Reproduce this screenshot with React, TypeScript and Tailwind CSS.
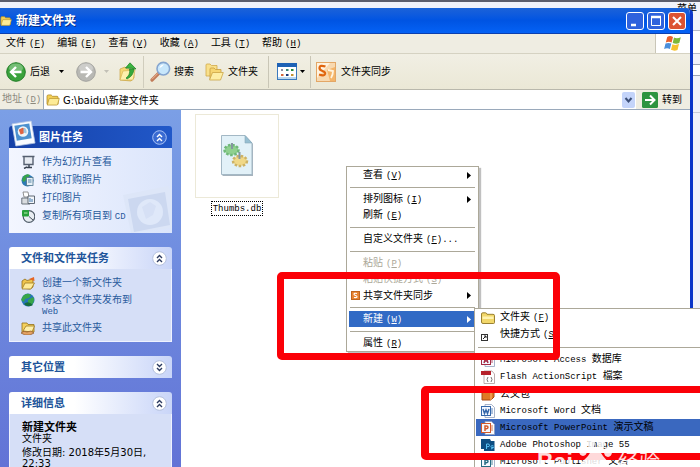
import React from "react";

const ui = "font-['Liberation_Sans','Noto_Sans_CJK_SC',sans-serif]";

// ASCII runs are set in a narrow monospace, the rest in the CJK face
function Mixed({ text }: { text: string }) {
  return (
    <>
      {text.split(/([\x21-\x7e][\x20-\x7e]*)/).map((part, i) =>
        /^[\x21-\x7e]/.test(part) ? (
          <span key={i} className="font-['Liberation_Mono',monospace] text-[9px] whitespace-pre">
            {part}
          </span>
        ) : (
          part
        ),
      )}
    </>
  );
}

interface AccelProps {
  label: string;
  letter?: string;
  suffix?: string;
}

function Accel({ label, letter, suffix }: AccelProps) {
  return (
    <span className="whitespace-nowrap">
      <Mixed text={label} />
      {letter && (
        <span className="font-['Liberation_Mono',monospace] text-[9px] ml-[3px]">
          (<u>{letter}</u>){suffix}
        </span>
      )}
    </span>
  );
}

function FolderIcon({ className = "w-[15px] h-[13px]" }: { className?: string }) {
  return (
    <svg viewBox="0 0 15 13" className={`${className} shrink-0`}>
      <path d="M1 11V2.5Q1 1 2.5 1H5.5L7 2.5H12Q13 2.5 13 4V11Z" fill="#f3cf55" stroke="#a98420" strokeWidth=".8" />
      <path d="M1.3 12L3.2 5.5Q3.4 4.8 4.2 4.8H14.3L12.5 11.3Q12.3 12 11.5 12Z" fill="#fdeb97" stroke="#b8942e" strokeWidth=".8" />
    </svg>
  );
}

function ClosedFolderIcon() {
  return (
    <svg viewBox="0 0 14 12" className="w-[14px] h-3 shrink-0">
      <path d="M.5 10V2Q.5 .8 1.8 .8H4.5Q5.5 .8 6 2.3H12Q13.5 2.3 13.5 3.6V10.5Q13.5 11.5 12.5 11.5H2Q.5 11.5 .5 10Z" fill="#f2d76a" stroke="#8f7524" strokeWidth=".9" />
      <path d="M1.5 4.5H12.5V7H1.5Z" fill="#fff3b0" />
    </svg>
  );
}

function ArrowCircle({ back }: { back?: boolean }) {
  return (
    <svg viewBox="0 0 20 20" className="w-5 h-5 shrink-0">
      <circle cx="10" cy="10" r="9.3" fill={back ? "#3aa23c" : "#b8b8b4"} stroke={back ? "#227d27" : "#a2a29e"} />
      <ellipse cx="10" cy="6" rx="7" ry="4.5" fill="#fff" opacity=".3" />
      <path
        d={back ? "M15.5 10H5.5M10 5L5 10L10 15" : "M4.5 10H14.5M10 5L15 10L10 15"}
        fill="none"
        stroke="#fff"
        strokeWidth="2.4"
      />
    </svg>
  );
}

function DownMark({ className }: { className: string }) {
  return (
    <svg viewBox="0 0 5 3" className={`w-[5px] h-[3px] shrink-0 ${className}`}>
      <path d="M0 0H5L2.5 3Z" fill="currentColor" />
    </svg>
  );
}

function UpFolderIcon() {
  return (
    <svg viewBox="0 0 18 20" className="w-[18px] h-5 shrink-0">
      <path d="M1 18V7L6 5L8 7H15V16L12 19Z" fill="#f5d873" stroke="#c9a545" strokeWidth=".7" />
      <path d="M1 18L4 9L16 8L14 18Z" fill="#fdf0ac" stroke="#d0ad4c" strokeWidth=".6" />
      <path d="M7 16Q11.5 13 10.5 7H15Q14.5 14 8 17Z" fill="#36a93b" stroke="#187c22" strokeWidth=".6" />
      <path d="M6.5 6L11 .8L17 7L12.5 6.3Z" fill="#3cb541" stroke="#187c22" strokeWidth=".7" />
    </svg>
  );
}

function SearchIcon() {
  return (
    <svg viewBox="0 0 21 21" className="w-[21px] h-[21px] shrink-0">
      <path d="M2 19L9 12" stroke="#c17b58" strokeWidth="3.2" strokeLinecap="round" />
      <path d="M2 18.3L8 12.3" stroke="#f0b794" strokeWidth="1" />
      <circle cx="13.3" cy="7.7" r="6.3" fill="#c8e7fb" stroke="#85a5cf" strokeWidth="1.6" />
      <path d="M9.5 7Q10 3.7 14 3.5Q12 6 9.5 7Z" fill="#fff" />
    </svg>
  );
}

function FoldersIcon() {
  return (
    <svg viewBox="0 0 19 18" className="w-[19px] h-[18px] shrink-0">
      <path d="M1 13V2Q1 1 2 1H5L6.5 2.5H12V13Z" fill="#f9e08a" stroke="#d1a94a" strokeWidth=".8" />
      <path d="M5 16V6Q5 5 6 5H9L10.5 6.5H16V9" fill="#f6d672" stroke="#c89d3c" strokeWidth=".8" />
      <path d="M4.5 17L7.5 9.5H18.3L15.5 17Z" fill="#fdeea5" stroke="#cba445" strokeWidth=".8" />
    </svg>
  );
}

function ViewsIcon() {
  return (
    <svg viewBox="0 0 20 17" className="w-5 h-[17px] shrink-0">
      <rect x=".5" y=".5" width="19" height="16" fill="#fff" stroke="#3a79bd" />
      <rect width="20" height="4" fill="#1e62b5" />
      <rect x="1" y="14" width="18" height="2" fill="#b9d7ef" />
      <rect x="4" y="6" width="2" height="2" fill="#8e8ca2" />
      <rect x="9" y="6" width="2.5" height="2" fill="#398775" />
      <rect x="14" y="6" width="2.5" height="2" fill="#25883a" />
      <rect x="4" y="11" width="2.5" height="2" fill="#d5683d" />
      <rect x="9" y="11" width="2.5" height="2" fill="#183778" />
      <rect x="14" y="11" width="2.5" height="2" fill="#c49330" />
    </svg>
  );
}

function SyncIcon() {
  return (
    <svg viewBox="0 0 20 20" className="w-5 h-5 shrink-0">
      <rect x=".5" y=".5" width="19" height="19" fill="#f8d9b0" stroke="#e3a766" />
      <path d="M1 1H14L1 16Z" fill="#fff3e0" />
      <path d="M11 8L19 5V19H14Z" fill="#f4b56a" />
      <path d="M9.5 4.5Q3.5 2.5 3.5 6Q3.5 8 6.5 9Q9.5 10 9 12Q8.3 14.5 3 12.5" fill="none" stroke="#e0650e" strokeWidth="2.3" />
      <path d="M12 8L17 9Q17 13 15 16" fill="none" stroke="#fff4df" strokeWidth="1.8" />
    </svg>
  );
}

function SmallSyncIcon() {
  return (
    <svg viewBox="0 0 9 9" className="w-[9px] h-[9px]">
      <rect x=".5" y=".5" width="8" height="8" fill="#e88331" stroke="#c0641d" />
      <path d="M6 2.5Q3 1.8 3 3.3Q3 4.2 4.5 4.5Q6 4.9 6 5.8Q5.8 7 3 6.5" fill="none" stroke="#fff" strokeWidth="1.1" />
    </svg>
  );
}

function WindowsFlag() {
  return (
    <svg viewBox="0 0 18 17" className="w-[18px] h-[17px]">
      <path d="M3.2 2Q6 .2 9 2L7.6 7.5Q4.8 6 1.8 7.5Z" fill="#e8602c" />
      <path d="M10 2.6Q13 4 16.8 2.3L15.3 8Q12.2 9.5 8.7 8Z" fill="#7cb83a" />
      <path d="M1.5 8.6Q4.4 7.2 7.3 8.6L5.9 14Q3.3 12.4 .1 13.9Z" fill="#4a8fdc" />
      <path d="M8.4 9.2Q11.4 10.7 15 9.1L13.5 14.9Q10.3 16.4 7 14.8Z" fill="#f6c22f" />
    </svg>
  );
}

const taskIcons = {
  slides: (
    <>
      <path d="M1.5 1.5H13.5M3 2V9.5H12V2" fill="#e7ebf2" stroke="#555f70" strokeWidth="1.4" />
      <path d="M6 12.5H11M8 10V12M3 13.5L6 12" stroke="#38414f" strokeWidth="1.4" />
    </>
  ),
  order: (
    <>
      <circle cx="6.5" cy="7.5" r="6" fill="#2c7ab5" />
      <path d="M2 4Q5 0 9 2L6 6L3 9Q0 8 2 4Z" fill="#38a34a" />
      <rect x="5.5" y="4.5" width="6.5" height="8" fill="#e7f1f7" stroke="#4b738b" strokeWidth=".8" />
      <path d="M7 7H10.5M7 9H10.5" stroke="#5383a4" />
    </>
  ),
  print: (
    <>
      <path d="M2 1H7L8 6H3Z" fill="#fff" stroke="#777" strokeWidth=".8" />
      <path d="M.8 7H9V13H.8Z" fill="#d9dcdf" stroke="#5d6670" strokeWidth=".9" />
      <path d="M7 5H13.5V12.5H7Z" fill="#f3f6fa" stroke="#4f5a66" strokeWidth=".9" />
      <path d="M9 7V11M11 8V11" stroke="#3f76ac" />
    </>
  ),
  copy: (
    <>
      <circle cx="8" cy="7.5" r="5.8" fill="#e8edf2" stroke="#515d69" strokeWidth="1.2" />
      <path d="M8 7.5L12 11" stroke="#45505d" />
      <rect x="1" y="1" width="7" height="6.5" rx="1" fill="#27a13a" />
      <path d="M3 4H6.5" stroke="#b9ecaf" />
    </>
  ),
  newFolder: (
    <>
      <path d="M1 12V5L4 3L6 4.5L12 3V11L9 13Z" fill="#efc44d" stroke="#93701a" strokeWidth=".8" />
      <path d="M1 13L4 7H13.5L10 13Z" fill="#ffeb99" stroke="#a07b22" strokeWidth=".8" />
      <path d="M8 3L13 1L13.5 5Z" fill="#e76523" />
    </>
  ),
  web: (
    <>
      <circle cx="7" cy="7" r="6.5" fill="#2675b8" />
      <path d="M2 3Q6-1 10 2L8 5L4 6L3 9L0 7ZM7 7L12 4Q15 8 10 12L7 10Z" fill="#37a649" />
      <path d="M3 11Q7 7 12 12Q7 15 3 11Z" fill="#176c3b" />
    </>
  ),
  share: (
    <>
      <path d="M1 11V2H6L7 3.5H13V11Z" fill="#f5d15c" stroke="#93701a" strokeWidth=".8" />
      <path d="M2 10L5 5H13.5L11 11Z" fill="#fff0aa" stroke="#a07b22" strokeWidth=".8" />
      <path d="M0 12Q3 9 6 11L10 10L13 12L9 14H4Z" fill="#e3a263" stroke="#8b552a" strokeWidth=".7" />
    </>
  ),
};

type TaskIconName = keyof typeof taskIcons;

function TaskLink({ icon, label }: { icon: TaskIconName; label: string }) {
  return (
    <a href="#" className="flex items-start gap-[7px] text-[#285a9c]">
      <svg viewBox="0 0 14 14" className="w-[14px] h-[14px] mt-px shrink-0">
        {taskIcons[icon]}
      </svg>
      <span className="max-w-[100px] pt-[2px] leading-[11px]">
        <Mixed text={label} />
      </span>
    </a>
  );
}

interface PanelProps {
  title: string;
  primary?: boolean;
  collapsed?: boolean;
  children?: React.ReactNode;
}

function Panel({ title, primary, collapsed, children }: PanelProps) {
  return (
    <section className="relative">
      <h2
        className={`flex h-[22px] items-center justify-between rounded-t-[3px] pr-[5px] font-bold text-[11px] ${
          primary
            ? "bg-linear-to-r from-[#1541a8] to-[#2158c9] pl-[30px] text-white"
            : "bg-linear-to-r from-white from-40% to-[#c9d5f8] pl-3 text-[#20549a]"
        }`}
      >
        {title}
        <button aria-label={title} className="w-[15px] h-[15px]">
          <svg viewBox="0 0 15 15" className="w-full h-full">
            <circle cx="7.5" cy="7.5" r="6.8" fill={primary ? "#3a6bd2" : "#fff"} stroke={primary ? "#a9c2f5" : "#b4c0dc"} />
            <path
              d={collapsed ? "M5 4L7.5 6.5L10 4M5 8L7.5 10.5L10 8" : "M5 7L7.5 4.5L10 7M5 11L7.5 8.5L10 11"}
              fill="none"
              stroke={primary ? "#fff" : "#2c3b60"}
              strokeWidth="1.4"
            />
          </svg>
        </button>
      </h2>
      {children}
    </section>
  );
}

function PhotoIcon({ className }: { className: string }) {
  return (
    <svg viewBox="0 0 26 28" className={className}>
      <path d="M1 4L21 1L25 24L5 27Z" fill="#f8fbff" stroke="#b7c8e2" strokeWidth=".8" />
      <path d="M3.5 6L19 3.5L21.5 19L6 21.5Z" fill="#4c91cf" />
      <circle cx="12.5" cy="12" r="5.5" fill="#eef5f8" />
      <path d="M8 10L12 8L15 9L13 14L10 15Z" fill="#df6543" />
      <path d="M13 8Q17 9 16 14L13 13Z" fill="#9ec6df" />
    </svg>
  );
}

function PhotoWatermark() {
  return (
    <svg viewBox="0 0 50 48" className="absolute right-0 bottom-0 w-[50px] h-12">
      <path d="M1 10L46 1L50 8V43L9 48Z" fill="#dde6f8" />
      <path d="M6 14L43 7L48 40L12 47Z" fill="#ccd8f0" />
      <circle cx="28" cy="27" r="13" fill="#dfe8f9" />
      <path d="M20 22L28 17L34 21L31 30L24 34Z" fill="#d6e0f5" />
    </svg>
  );
}

function Sidebar() {
  return (
    <aside className="flex w-[181px] shrink-0 flex-col gap-[14px] bg-linear-to-b from-[#7b9fe6] to-[#6273d6] px-[9px] pt-4">
      <Panel title="图片任务" primary>
        <PhotoIcon className="absolute left-[2px] -top-[6px] w-[25px] h-[27px]" />
        <div className="relative bg-linear-to-r from-[#f3f6ff] to-[#dbe5fb] pl-3 pt-[6px] pb-[10px]">
          <PhotoWatermark />
          <div className="relative flex flex-col gap-[3px]">
            <TaskLink icon="slides" label="作为幻灯片查看" />
            <TaskLink icon="order" label="联机订购照片" />
            <TaskLink icon="print" label="打印图片" />
            <TaskLink icon="copy" label="复制所有项目到 CD" />
          </div>
        </div>
      </Panel>
      <Panel title="文件和文件夹任务">
        <div className="flex flex-col gap-[2px] border border-t-0 border-[#eef2ff] bg-[#d6dff7] pl-[11px] pt-[6px] pb-[6px]">
          <TaskLink icon="newFolder" label="创建一个新文件夹" />
          <TaskLink icon="web" label="将这个文件夹发布到 Web" />
          <TaskLink icon="share" label="共享此文件夹" />
        </div>
      </Panel>
      <Panel title="其它位置" collapsed />
      <Panel title="详细信息">
        <div className="border-x border-[#eef2ff] bg-[#d6dff7] px-3 pt-2 pb-6 leading-[11px]">
          <p className="text-[11px] font-bold text-black">新建文件夹</p>
          <p>文件夹</p>
          <p className="mt-[3px] font-['DejaVu_Sans','Noto_Sans_CJK_SC',sans-serif]">修改日期: 2018年5月30日, 22:33</p>
        </div>
      </Panel>
    </aside>
  );
}

interface MenuEntry extends AccelProps {
  arrow?: boolean;
  disabled?: boolean;
  active?: boolean;
  icon?: React.ReactNode;
}

const contextMenu: (MenuEntry | null)[] = [
  { label: "查看", letter: "V", arrow: true },
  null,
  { label: "排列图标", letter: "I", arrow: true },
  { label: "刷新", letter: "E" },
  null,
  { label: "自定义文件夹", letter: "F", suffix: "..." },
  null,
  { label: "粘贴", letter: "P", disabled: true },
  { label: "粘贴快捷方式", letter: "S", disabled: true },
  { label: "共享文件夹同步", arrow: true, icon: <SmallSyncIcon /> },
  null,
  { label: "新建", letter: "W", arrow: true, active: true },
  null,
  { label: "属性", letter: "R" },
];

function ContextMenu() {
  return (
    <div className="absolute left-[346px] top-[166px] w-[133px] border border-[#aca899] bg-white px-[2px] shadow-[2px_2px_1px_#8888]">
      {contextMenu.map((item, i) =>
        item ? (
          <button
            key={i}
            disabled={item.disabled}
            className={`flex h-4 w-full items-center pt-px pr-[5px] text-left ${
              item.active ? "bg-[#316ac5] text-white" : item.disabled ? "text-[#aca899]" : "text-black"
            }`}
          >
            <span className="w-[14px] pl-[2px]">{item.icon}</span>
            <span className="flex-1">
              <Accel label={item.label} letter={item.letter} suffix={item.suffix} />
            </span>
            {item.arrow && (
              <svg viewBox="0 0 4 7" className="w-1 h-[7px]">
                <path d="M0 0L4 3.5L0 7Z" fill="currentColor" />
              </svg>
            )}
          </button>
        ) : (
          <hr key={i} className="mx-px mt-1 mb-[3px] border-[#aca899]" />
        ),
      )}
    </div>
  );
}

function DocIcon({ color, mark }: { color: string; mark: React.ReactNode }) {
  return (
    <svg viewBox="0 0 14 14" className="w-[14px] h-[14px]">
      <path d="M4 .5H10.5L13.5 3.5V13.5H4Z" fill="#fbfcff" stroke="#91a0bd" strokeWidth=".8" />
      <path d="M10 5H12M10 7H12M10 9H12" stroke={color} strokeWidth=".8" />
      <rect x=".5" y="2.5" width="9" height="9" fill="#f3f7ff" stroke={color} />
      <g fill="none" stroke={color} strokeWidth="1.5">
        {mark}
      </g>
    </svg>
  );
}

const newMenu: (MenuEntry | null)[] = [
  { label: "文件夹", letter: "F", icon: <ClosedFolderIcon /> },
  {
    label: "快捷方式",
    letter: "S",
    icon: (
      <svg viewBox="0 0 14 14" className="w-[14px] h-[14px]">
        <rect x=".5" y="6.5" width="6" height="6" fill="#fff" stroke="#333" />
        <path d="M2 11L5 8M3 8H5V10" stroke="#222" fill="none" />
      </svg>
    ),
  },
  null,
  { label: "Microsoft Access 数据库", icon: <DocIcon color="#a52b45" mark={<path d="M3 10L5 4L7 10M4 8H6" />} /> },
  {
    label: "Flash ActionScript 檔案",
    icon: (
      <svg viewBox="0 0 14 14" className="w-[14px] h-[14px]">
        <path d="M3 1H11L13.5 4V13.5H3Z" fill="#fff" stroke="#a99" strokeWidth=".8" />
        <rect x="0" y="1" width="10" height="4" fill="#b5202a" />
        <path d="M7 7Q5 9.5 7 12M10 7Q12 9.5 10 12" fill="none" stroke="#777" />
      </svg>
    ),
  },
  {
    label: "公文包",
    icon: (
      <svg viewBox="0 0 14 14" className="w-[14px] h-[14px]">
        <path d="M1 5L4 2H13V10L10 13H1Z" fill="#df7924" stroke="#a84b13" />
        <path d="M1 5H10V13" stroke="#ffba72" fill="none" />
      </svg>
    ),
  },
  { label: "Microsoft Word 文档", icon: <DocIcon color="#3567aa" mark={<path d="M2 5L3.5 9.5L5 6L6.5 9.5L8 5" />} /> },
  {
    label: "Microsoft PowerPoint 演示文稿",
    active: true,
    icon: <DocIcon color="#d35a2a" mark={<path d="M4 10V5H5.5Q7 5 7 6.3T5.5 7.8H4" />} />,
  },
  {
    label: "Adobe Photoshop Image 55",
    icon: (
      <svg viewBox="0 0 14 14" className="w-[14px] h-[14px]">
        <path d="M0 1H9L10 3H13.5V13H3V11H0Z" fill="#0c4d82" />
        <path d="M5.5 11V6H7Q8.5 6 8.5 7.3T7 8.7H5.5M12.5 8Q10 7 10 8.5T12 9.5T10 11" fill="none" stroke="#58c2f5" />
      </svg>
    ),
  },
  { label: "Microsoft Publisher 文档", icon: <DocIcon color="#276b83" mark={<path d="M4 10V5H5.5Q7 5 7 6.3T5.5 7.8H4" />} /> },
];

function NewMenu() {
  return (
    <div className="absolute left-[474px] right-0 top-[308px] border border-r-0 border-[#aca899] bg-white pl-px">
      {newMenu.map((item, i) =>
        item ? (
          <button
            key={i}
            className={`flex h-[17px] w-full items-center text-left text-black ${item.active ? "bg-[#3a68bf]" : ""}`}
          >
            <span className="w-6 shrink-0 pl-[5px]">{item.icon}</span>
            <Accel label={item.label} letter={item.letter} />
          </button>
        ) : (
          <hr key={i} className="ml-[2px] mt-1 mb-[3px] border-[#aca899]" />
        ),
      )}
    </div>
  );
}

function TitleBar() {
  return (
    <header className="flex h-[26px] items-center gap-1 bg-linear-to-b from-[#1b62d8] via-[#0054e3] to-[#0562f5] pr-1 border-b border-[#0b3fae]">
      <FolderIcon className="w-3 h-3" />
      <h1 className="flex-1 text-xs font-bold text-white [text-shadow:1px_1px_#0b2f86]">新建文件夹</h1>
      <div className="flex gap-[3px]">
        <button aria-label="最小化" className="h-[18px] w-[18px] rounded-[3px] border border-white bg-[#2f62dd]">
          <svg viewBox="0 0 16 16">
            <path d="M4 12H9" stroke="#fff" strokeWidth="2.5" />
          </svg>
        </button>
        <button aria-label="最大化" className="h-[18px] w-[18px] rounded-[3px] border border-white bg-[#2f62dd]">
          <svg viewBox="0 0 16 16">
            <path d="M3.5 4V12.5H12.5V4" fill="none" stroke="#fff" />
            <path d="M3 4H13" stroke="#fff" strokeWidth="2.5" />
          </svg>
        </button>
        <button aria-label="关闭" className="h-[18px] w-[18px] rounded-[3px] border border-white bg-[#dc5432]">
          <svg viewBox="0 0 16 16">
            <path d="M4 4L12 12M12 4L4 12" stroke="#fff" strokeWidth="2" />
          </svg>
        </button>
      </div>
    </header>
  );
}

const menus = [
  ["文件", "F"],
  ["编辑", "E"],
  ["查看", "V"],
  ["收藏", "A"],
  ["工具", "T"],
  ["帮助", "H"],
];

function ToolBars() {
  return (
    <>
      <nav className="flex h-5 items-stretch border-b border-[#d5d2c2] bg-[#efede2]">
        <div className="flex flex-1 items-center gap-3 pl-[6px]">
          {menus.map(([label, letter]) => (
            <button key={label}>
              <Accel label={label} letter={letter} />
            </button>
          ))}
        </div>
        <div className="flex w-[35px] items-center justify-center border-l border-[#c9c6b8] bg-white">
          <WindowsFlag />
        </div>
      </nav>
      <div className="flex h-9 items-center border-b border-[#b9b8ac] bg-linear-to-b from-[#f1efe4] to-[#ebe8d6] pl-[6px]">
        <button className="flex items-center gap-1">
          <ArrowCircle back />
          后退
          <DownMark className="ml-[5px] text-black" />
        </button>
        <button aria-label="前进" className="ml-3 flex items-center gap-2">
          <ArrowCircle />
          <DownMark className="text-[#c2c0b6]" />
        </button>
        <button aria-label="向上" className="ml-[10px]">
          <UpFolderIcon />
        </button>
        <span className="mx-[6px] h-8 w-px bg-[#d0cdbd]" />
        <button className="flex items-center gap-[3px]">
          <SearchIcon />
          搜索
        </button>
        <button className="ml-[11px] flex items-center gap-1">
          <FoldersIcon />
          文件夹
        </button>
        <span className="ml-[10px] mr-2 h-8 w-px bg-[#c9c6b6]" />
        <button aria-label="视图" className="flex items-center gap-[3px]">
          <ViewsIcon />
          <DownMark className="text-black" />
        </button>
        <span className="mx-[5px] h-8 w-px bg-[#c9c6b6]" />
        <button className="flex items-center gap-[5px]">
          <SyncIcon />
          文件夹同步
        </button>
      </div>
      <div className="flex h-5 items-center border-b border-[#9aa9bb] bg-[#efede2]">
        <label htmlFor="address" className="w-[43px] pl-[2px] text-[#8b897e]">
          <Accel label="地址" letter="D" />
        </label>
        <div className="flex h-full flex-1 items-center gap-[3px] border-l border-[#9aa9bb] bg-white pl-[2px] pr-px">
          <FolderIcon className="w-[14px] h-3" />
          <input
            id="address"
            defaultValue="G:\baidu\新建文件夹"
            className="h-4 min-w-0 flex-1 bg-transparent font-['DejaVu_Sans','Noto_Sans_CJK_SC',sans-serif] outline-none"
          />
          <button aria-label="展开" className="h-4 w-[13px] rounded-[2px] bg-[#c4d4fa]">
            <svg viewBox="0 0 13 16">
              <path d="M3.5 6L6.5 9.5L9.5 6" fill="none" stroke="#3c4f78" strokeWidth="2" />
            </svg>
          </button>
        </div>
        <button className="flex items-center gap-1 pl-[6px] pr-2">
          <svg viewBox="0 0 16 16" className="w-4 h-4">
            <rect width="16" height="16" rx="1.5" fill="#2d9440" />
            <path d="M3 8H12M8 3.5L12.5 8L8 12.5" fill="none" stroke="#fff" strokeWidth="2" />
          </svg>
          转到
        </button>
      </div>
    </>
  );
}

function ThumbsFile() {
  return (
    <figure className="ml-[14px] mt-1 flex w-[84px] flex-col items-center gap-[3px]">
      <div className="flex h-[84px] w-full items-center justify-center border border-[#ece9d8]">
        <svg viewBox="0 0 33 42" className="w-[33px] h-[42px]">
          <path d="M1.5 1.5H25L32 9V41H1.5Z" fill="#a6b3bd" />
          <path d="M.5 .5H24L31 8V39.5H.5Z" fill="#e2f1f8" stroke="#a3b8c5" />
          <path d="M24 .5V8H31Z" fill="#96bfd2" stroke="#8aa8b8" strokeWidth=".6" />
          <ellipse cx="10.5" cy="15" rx="7" ry="5" fill="#8fd08f" stroke="#6fb878" strokeWidth="2.5" strokeDasharray="2.5 1.6" />
          <ellipse cx="19" cy="26" rx="7" ry="5" fill="#f0d888" stroke="#cdb265" strokeWidth="2.5" strokeDasharray="2.5 1.6" />
          <path d="M11 8V14M18.5 17V24" stroke="#8496a0" strokeWidth="2" />
        </svg>
      </div>
      <figcaption className="border border-dotted border-black px-px leading-[11px]">
        <Mixed text="Thumbs.db" />
      </figcaption>
    </figure>
  );
}

function Watermark() {
  return (
    <div className="absolute left-[537px] top-[438px] flex items-start font-bold text-white/85">
      <span className="w-[38px] pt-[13px] text-[23px]">Bai</span>
      <svg viewBox="0 0 40 30" className="w-10 h-[30px]" fill="#fff" opacity=".85">
        <ellipse cx="8" cy="13" rx="4" ry="5" />
        <ellipse cx="16" cy="5" rx="4" ry="5" />
        <ellipse cx="26" cy="5" rx="4" ry="5" />
        <ellipse cx="33" cy="14" rx="4" ry="5" />
        <path d="M20 12Q25 12 28 18L34 25V30H6V25L13 18Q16 12 20 12Z" />
      </svg>
      <span className="pt-[13px] pl-[3px] text-[21px] font-normal">经验</span>
    </div>
  );
}

export default function App() {
  return (
    <div className={`relative flex h-screen flex-col overflow-hidden bg-[#f1f2fa] text-[10px] leading-none text-black ${ui}`}>
      <div className="flex h-2 shrink-0 justify-end border-t-2 border-[#5c5d6c] pr-[3px] pt-[2px]">菜单</div>
      <div className="flex min-h-0 flex-1">
        <main className="relative flex min-w-0 flex-1 flex-col overflow-hidden rounded-tr-[6px] border-r-[3px] border-[#0a35c8] bg-white">
          <TitleBar />
          <ToolBars />
          <div className="flex min-h-0 flex-1 overflow-hidden">
            <Sidebar />
            <ThumbsFile />
          </div>
        </main>
        <div className="w-[7px] pt-[22px]">
          <div className="h-6 border-y border-[#b7bac8] bg-white" />
          <div className="mt-[10px] h-3 border-y border-[#9da5b5] bg-white" />
          <div className="mt-9 border-t border-[#c9ccd8]" />
        </div>
      </div>

      <ContextMenu />
      <NewMenu />

      <div className="absolute left-[277px] top-[272px] h-[88px] w-[283px] rounded-[5px] border-[7px] border-[#fb0007]" />
      <div className="absolute left-[421px] -right-2 top-[386px] h-[74px] rounded-[5px] border-[7px] border-l-8 border-[#fb0007]" />
      <Watermark />
    </div>
  );
}
